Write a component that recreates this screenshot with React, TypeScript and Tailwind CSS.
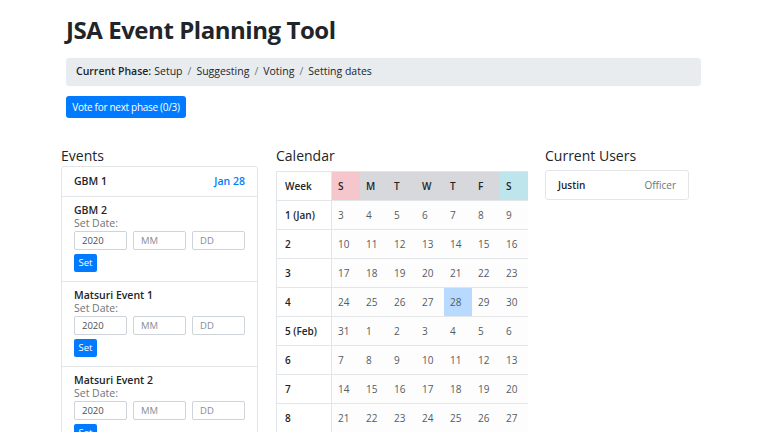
const events = [
  { name: 'GBM 1', date: 'Jan 28' },
  { name: 'GBM 2' },
  { name: 'Matsuri Event 1' },
  { name: 'Matsuri Event 2' },
];

const days = ['S', 'M', 'T', 'W', 'T', 'F', 'S'];

const weeks = [
  { label: '1 (Jan)', dates: [3, 4, 5, 6, 7, 8, 9] },
  { label: '2', dates: [10, 11, 12, 13, 14, 15, 16] },
  { label: '3', dates: [17, 18, 19, 20, 21, 22, 23] },
  { label: '4', dates: [24, 25, 26, 27, 28, 29, 30] },
  { label: '5 (Feb)', dates: [31, 1, 2, 3, 4, 5, 6] },
  { label: '6', dates: [7, 8, 9, 10, 11, 12, 13] },
  { label: '7', dates: [14, 15, 16, 17, 18, 19, 20] },
  { label: '8', dates: [21, 22, 23, 24, 25, 26, 27] },
];

function headerBg(i: number) {
  if (i === 0) return 'bg-[#f5c6cb]';
  if (i === 6) return 'bg-[#bee5eb]';
  return 'bg-[#d6d8db]';
}

function DateForm() {
  return (
    <>
      <div className="text-[10.5px] leading-[13px] text-[#6c757d]">Set Date:</div>
      <div className="flex gap-[6px] mt-[1px]">
        <div className="w-[54px] h-[19px] border border-[#ced4da] rounded-[2px] px-[7px] text-[9.5px] leading-[17px] text-[#495057]">2020</div>
        <div className="w-[54px] h-[19px] border border-[#ced4da] rounded-[2px] px-[7px] text-[9.5px] leading-[17px] text-[#868e96]">MM</div>
        <div className="w-[54px] h-[19px] border border-[#ced4da] rounded-[2px] px-[7px] text-[9.5px] leading-[17px] text-[#868e96]">DD</div>
      </div>
      <div className="mt-[4px] w-[23px] h-[18px] rounded-[2px] bg-[#007bff] text-white text-[9.5px] leading-[18px] text-center">Set</div>
    </>
  );
}

export default function App() {
  return (
    <div className="bg-white text-[#212529] font-['Open_Sans',sans-serif] overflow-hidden h-[432px]">
      <div className="ml-[61px] w-[645px] pt-[13px]">
        {/* Header */}
        <div className="px-[5px]">
          <h1 className="text-[24px] leading-[34px] font-bold tracking-[-0.45px]">JSA Event Planning Tool</h1>
          <div className="mt-[11px] h-[28px] rounded-[3px] bg-[#e9ecef] flex items-center px-[10px] text-[10.5px] text-[#212529]">
            <span className="font-semibold mr-[3px]">Current Phase:</span>
            <span>Setup</span>
            <span className="mx-[5px] text-[#6c757d]">/</span>
            <span>Suggesting</span>
            <span className="mx-[5px] text-[#6c757d]">/</span>
            <span>Voting</span>
            <span className="mx-[5px] text-[#6c757d]">/</span>
            <span>Setting dates</span>
          </div>
          <div className="mt-[10px] inline-block h-[22px] w-[120px] text-center rounded-[3px] bg-[#007bff] text-white text-[10px] tracking-[-0.3px] leading-[22px]">
            Vote for next phase (0/3)
          </div>
        </div>

        {/* Columns */}
        <div className="flex mt-[28px]">
          {/* Events */}
          <div className="w-[197px]">
            <h2 className="text-[14px] leading-[20px] font-medium">Events</h2>
            <div className="border border-[#e3e6e9] rounded-[3px]">
              {events.map((ev, i) =>
                ev.date ? (
                  <div key={i} className="h-[30px] px-[12px] flex items-center justify-between border-b border-[#e3e6e9]">
                    <span className="text-[10.5px] font-semibold">{ev.name}</span>
                    <span className="text-[10.5px] font-semibold text-[#007bff]">{ev.date}</span>
                  </div>
                ) : (
                  <div key={i} className="h-[85px] px-[12px] pt-[6px] border-b border-[#e3e6e9]">
                    <div className="text-[10.5px] leading-[14px] font-semibold">{ev.name}</div>
                    <DateForm />
                  </div>
                ),
              )}
            </div>
          </div>

          {/* Calendar */}
          <div className="w-[252px] ml-[18px]">
            <h2 className="text-[14px] leading-[20px] font-medium">Calendar</h2>
            <div className="mt-[5px] border-l border-[#e3e6e9]">
              <div className="flex h-[29px] text-[10px] font-semibold items-center border-t border-[#e3e6e9]">
                <div className="w-[55px] h-full pl-[8px] flex items-center border-r border-[#e3e6e9]">Week</div>
                {days.map((d, i) => (
                  <div key={i} className={`w-[28px] h-full pl-[6px] flex items-center ${headerBg(i)}`}>{d}</div>
                ))}
              </div>
              {weeks.map((w) => (
                <div key={w.label} className="flex h-[29px] items-center border-t border-[#e3e6e9] bg-[#fdfdfe]">
                  <div className="w-[55px] h-full pl-[8px] flex items-center border-r border-[#e3e6e9] text-[10px] font-semibold bg-white">{w.label}</div>
                  {w.dates.map((n, i) => (
                    <div
                      key={i}
                      className={`w-[28px] h-full pl-[6px] flex items-center text-[10px] text-[#555b61] ${w.label === '4' && n === 28 ? 'bg-[#b8daff]' : ''}`}
                    >
                      {n}
                    </div>
                  ))}
                </div>
              ))}
            </div>
          </div>

          {/* Current Users */}
          <div className="w-[144px] ml-[17px]">
            <h2 className="text-[14px] leading-[20px] font-medium">Current Users</h2>
            <div className="mt-[4px] h-[30px] border border-[#e3e6e9] rounded-[3px] px-[12px] flex items-center justify-between">
              <span className="text-[10px] font-semibold">Justin</span>
              <span className="text-[10px] text-[#6c757d]">Officer</span>
            </div>
          </div>
        </div>
      </div>
    </div>
  );
}
